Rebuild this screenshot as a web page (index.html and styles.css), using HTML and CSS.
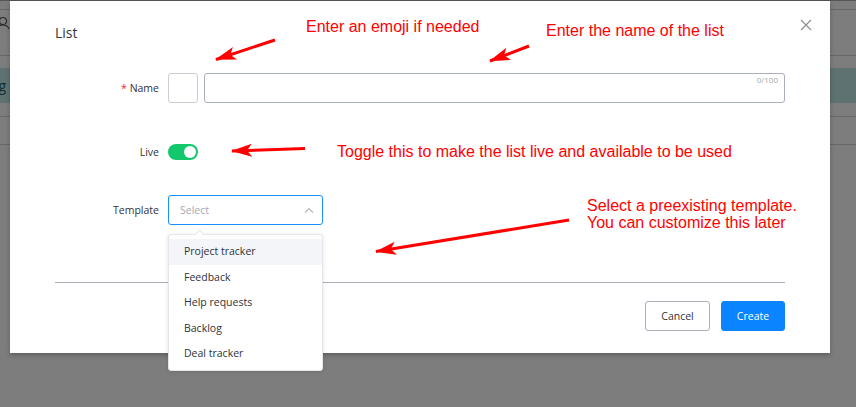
FILE: index.html
```html
<!DOCTYPE html>
<html>
<head>
<meta charset="utf-8">
<link rel="stylesheet" href="styles.css">
</head>
<body>
<div class="page">
  <div class="topbar"></div>
  <div class="header"><svg class="user-icon" width="14" height="14" viewBox="0 0 14 14"><circle cx="7" cy="5" r="3.5" fill="none" stroke="#555" stroke-width="1.2"/><path d="M1 13c1-3 3.5-4 6-4s5 1 6 4" fill="none" stroke="#555" stroke-width="1.2"/></svg></div>
  <div class="band"><span class="band-text">Big</span></div>
  <div class="row-a"></div>
  <div class="row-b"></div>
</div>

<div class="overlay">
  <div class="modal">
    <button class="close" aria-label="Close"><svg width="12" height="12" viewBox="0 0 12 12"><path d="M1 1L11 11M11 1L1 11" stroke="#8d8f94" stroke-width="1.2"/></svg></button>
    <div class="title">List</div>

    <div class="form-row row-name">
      <label class="label"><span class="req">*</span> Name</label>
      <div class="name-controls">
        <div class="emoji-box"></div>
        <div class="name-input"><span class="counter">0/100</span></div>
      </div>
    </div>

    <div class="form-row row-live">
      <label class="label">Live</label>
      <div><div class="toggle"><span class="knob"></span></div></div>
    </div>

    <div class="form-row row-template">
      <label class="label">Template</label>
      <div>
        <div class="select">
          <span class="placeholder">Select</span>
          <svg class="chevron" width="10" height="6" viewBox="0 0 10 6"><path d="M1 5.5L5 1.5L9 5.5" fill="none" stroke="#b3b8c0" stroke-width="1.1"/></svg>
          <div class="dropdown">
            <span class="notch"></span>
            <div class="item active">Project tracker</div>
            <div class="item">Feedback</div>
            <div class="item">Help requests</div>
            <div class="item">Backlog</div>
            <div class="item">Deal tracker</div>
          </div>
        </div>
      </div>
    </div>

    <div class="divider"></div>

    <div class="footer">
      <button class="btn btn-cancel">Cancel</button>
      <button class="btn btn-create">Create</button>
    </div>
  </div>

  <div class="note note-1">Enter an emoji if needed</div>
  <div class="note note-2">Enter the name of the list</div>
  <div class="note note-3">Toggle this to make the list live and available to be used</div>
  <div class="note note-4">Select a preexisting template.<br>You can customize this later</div>

  <svg class="arrows" width="856" height="407" viewBox="0 0 856 407">
    <defs>
      <marker id="head" markerUnits="userSpaceOnUse" markerWidth="22" markerHeight="14" refX="20" refY="7" orient="auto">
        <path d="M0 0.5L21 7L0 13.5L5 7Z" fill="#ff0000"/>
      </marker>
    </defs>
    <line x1="275" y1="40" x2="216" y2="59.5" stroke="#ff0000" stroke-width="3" marker-end="url(#head)"/>
    <line x1="529" y1="46" x2="490" y2="61" stroke="#ff0000" stroke-width="3" marker-end="url(#head)"/>
    <line x1="305" y1="148.5" x2="232" y2="151" stroke="#ff0000" stroke-width="3" marker-end="url(#head)"/>
    <line x1="569" y1="220" x2="376" y2="251.5" stroke="#ff0000" stroke-width="3" marker-end="url(#head)"/>
  </svg>
</div>
</body>
</html>
```

FILE: styles.css
```css
* { box-sizing: border-box; }
html, body { margin: 0; padding: 0; }
body {
  width: 856px;
  height: 407px;
  overflow: hidden;
  background: #fafafd;
  font-family: "Open Sans", "Noto Sans", sans-serif;
  position: relative;
}

/* underlying page */
.page { width: 856px; }
.topbar { height: 10px; border-top: 1px solid #aaa; border-bottom: 1px solid #cfcfd2; }
.header { height: 46px; border-bottom: 1px solid #cfcfd2; display: flex; align-items: center; }
.user-icon { margin-left: -4px; margin-top: -20px; }
.band { margin-top: 12px; height: 35px; background: #bde6e3; display: flex; align-items: center; }
.band-text { margin-left: -14px; font-size: 14px; color: #1d5a66; }
.row-a { height: 14px; border-bottom: 1px solid #cfcfd2; }
.row-b { height: 28px; border-bottom: 1px solid #cfcfd2; }

/* overlay */
.overlay {
  position: absolute;
  inset: 0;
  background: rgba(0, 0, 0, 0.5);
  padding: 1px 0 0 10px;
}
.modal {
  position: relative;
  width: 820px;
  height: 352px;
  background: #fff;
  padding: 22px 45px 22px 45px;
  box-shadow: 0 2px 5px rgba(0, 0, 0, 0.25);
  display: flex;
  flex-direction: column;
}
.close {
  position: absolute;
  top: 18px;
  right: 18px;
  width: 12px;
  height: 12px;
  padding: 0;
  border: 0;
  background: transparent;
  display: flex;
}
.title {
  height: 20px;
  line-height: 20px;
  font-size: 14px;
  color: #33363b;
}

.form-row {
  display: grid;
  grid-template-columns: 104px 1fr;
  column-gap: 9px;
  align-items: center;
  height: 30px;
}
.row-name { margin-top: 30px; }
.row-live { margin-top: 34px; }
.row-template { margin-top: 28px; }

.label {
  text-align: right;
  font-size: 10.5px;
  color: #2f3238;
}
.req { color: #f5222d; }

.name-controls { display: flex; gap: 6px; height: 30px; }
.emoji-box {
  width: 30px;
  height: 30px;
  border: 1px solid #c9cdd4;
  border-radius: 3px;
}
.name-input {
  position: relative;
  flex: 1;
  height: 30px;
  border: 1px solid #a9b0bb;
  border-radius: 3px;
}
.counter {
  position: absolute;
  top: 1px;
  right: 6px;
  font-size: 8px;
  line-height: 10px;
  color: #a3a6ab;
}

.toggle {
  width: 30px;
  height: 16px;
  border-radius: 8px;
  background: #13c86b;
  display: flex;
  align-items: center;
  justify-content: flex-end;
  padding-right: 2px;
}
.knob {
  width: 12px;
  height: 12px;
  border-radius: 50%;
  background: #fff;
}

.select {
  position: relative;
  width: 155px;
  height: 30px;
  border: 1px solid #1890ff;
  border-radius: 3px;
  display: flex;
  align-items: center;
  justify-content: space-between;
  padding: 0 8px 0 11px;
}
.placeholder { font-size: 10.5px; color: #a3a9b4; }
.dropdown {
  position: absolute;
  left: -1px;
  top: 38px;
  width: 155px;
  height: 137px;
  background: #fff;
  border: 1px solid #e4e6ea;
  border-radius: 3px;
  box-shadow: 0 1px 4px rgba(0, 0, 0, 0.12);
  padding-top: 4px;
  z-index: 2;
}
.notch {
  position: absolute;
  top: -4px;
  left: 27px;
  width: 7px;
  height: 7px;
  background: #fff;
  border-left: 1px solid #e4e6ea;
  border-top: 1px solid #e4e6ea;
  transform: rotate(45deg);
}
.item {
  height: 25.5px;
  line-height: 25.5px;
  padding-left: 15px;
  font-size: 10.5px;
  color: #2f3238;
}
.item.active { background: #f4f5f9; }

.divider {
  margin-top: 57px;
  height: 1px;
  background: #a9afbb;
}

.footer {
  margin-top: 18px;
  display: flex;
  justify-content: flex-end;
  gap: 11px;
}
.btn {
  height: 30px;
  border-radius: 3px;
  font-family: "Open Sans", "Noto Sans", sans-serif;
  font-size: 10.5px;
  padding: 0;
  cursor: pointer;
}
.btn-cancel {
  width: 65px;
  background: #fff;
  border: 1px solid #aab0bb;
  color: #2f3238;
}
.btn-create {
  width: 64px;
  background: #0a85ff;
  border: 1px solid #0a85ff;
  color: #fff;
  font-weight: 500;
}

/* annotations */
.note {
  position: absolute;
  font-family: "Liberation Sans", Arial, sans-serif;
  font-size: 16px;
  line-height: 18px;
  color: #ff0000;
  white-space: nowrap;
}
.note-1 { left: 306px; top: 18px; }
.note-2 { left: 546px; top: 22px; }
.note-3 { left: 337px; top: 143px; }
.note-4 { left: 587px; top: 197px; line-height: 17px; }
.arrows { position: absolute; left: 0; top: 0; pointer-events: none; }
```
